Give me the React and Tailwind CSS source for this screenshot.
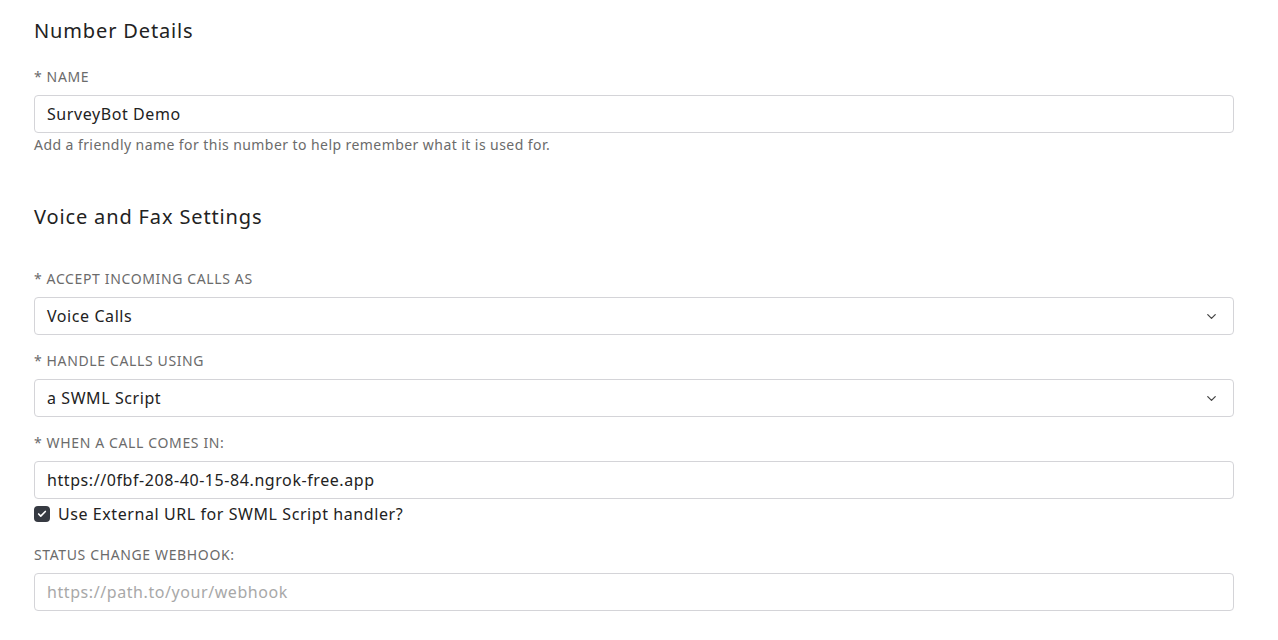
import { ChevronDown, Check } from 'lucide-react';

const font = { fontFamily: '"Noto Sans", "Open Sans", sans-serif' };

function Label({ children, className = '' }) {
  return (
    <div className={`text-[14px] leading-5 uppercase tracking-[0.045em] text-[#6b6b6b] ${className}`}>{children}</div>
  );
}

function TextInput({ value, placeholder }) {
  return (
    <div className="mt-2 flex h-[38px] items-center rounded border border-[#d4d4d8] bg-white px-3 text-[16px] tracking-[0.036em] text-[#222]">
      {value ? <span>{value}</span> : <span className="text-[#a8a8a8]">{placeholder}</span>}
    </div>
  );
}

function SelectBox({ value }) {
  return (
    <div className="mt-2 flex h-[38px] items-center justify-between rounded border border-[#d4d4d8] bg-white pl-3 pr-[14px] text-[16px] tracking-[0.036em] text-[#222]">
      <span>{value}</span>
      <ChevronDown className="h-[15px] w-[15px] text-[#444]" strokeWidth={2} />
    </div>
  );
}

export default function App() {
  return (
    <div className="min-h-[640px] bg-white pl-[34px] pr-[44px] pt-[17px]" style={font}>
      <h2 className="text-[20px] leading-7 tracking-[0.043em] text-[#222]">Number Details</h2>
      <Label className="mt-[22px]">* Name</Label>
      <TextInput value="SurveyBot Demo" />
      <p className="mt-[2px] text-[14px] leading-5 tracking-[0.031em] text-[#6b6b6b]">
        Add a friendly name for this number to help remember what it is used for.
      </p>

      <h2 className="mt-[48px] text-[20px] leading-7 tracking-[0.043em] text-[#222]">Voice and Fax Settings</h2>
      <Label className="mt-[38px]">* Accept incoming calls as</Label>
      <SelectBox value="Voice Calls" />
      <Label className="mt-4">* Handle calls using</Label>
      <SelectBox value="a SWML Script" />
      <Label className="mt-4">* When a call comes in:</Label>
      <TextInput value="https://0fbf-208-40-15-84.ngrok-free.app" />
      <div className="mt-[3px] flex h-6 items-center gap-2 text-[16px] tracking-[0.036em] text-[#222]">
        <span className="flex h-4 w-4 items-center justify-center rounded-[4px] bg-[#363a42]">
          <Check className="h-[10px] w-[10px] text-white" strokeWidth={4} />
        </span>
        <span>Use External URL for SWML Script handler?</span>
      </div>
      <Label className="mt-[19px]">Status change webhook:</Label>
      <TextInput placeholder="https://path.to/your/webhook" />
    </div>
  );
}
